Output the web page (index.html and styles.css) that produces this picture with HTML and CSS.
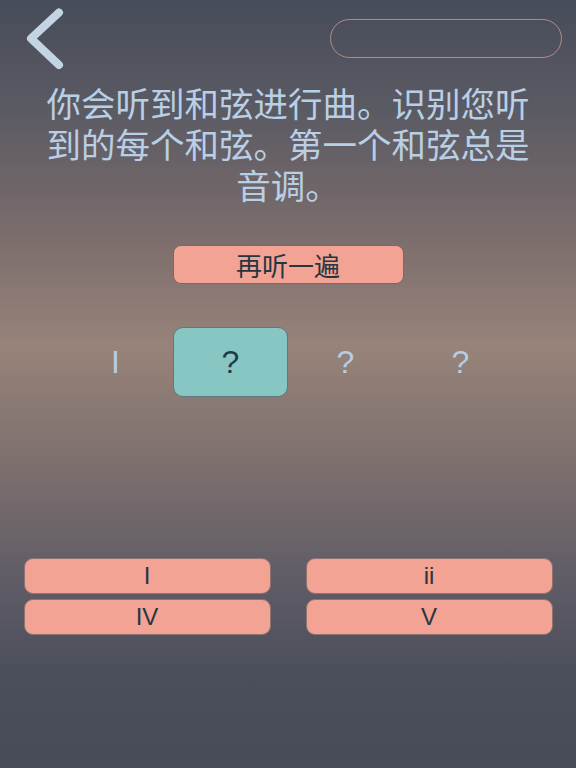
FILE: index.html
```html
<!DOCTYPE html>
<html lang="zh">
<head>
    <meta charset="UTF-8">
    <meta name="viewport" content="width=device-width, initial-scale=1.0">
    <title>和弦进行</title>
    <link rel="stylesheet" href="styles.css">
</head>
<body>
    <div class="screen">
        <!-- Top bar: back button and progress pill -->
        <div class="top-bar">
            <button class="back-btn" aria-label="返回">
                <svg width="44" height="64" viewBox="0 0 44 64">
                    <polyline points="36,5.5 8,31.5 36,58" fill="none" stroke="#c3d4e3" stroke-width="8" stroke-linecap="round" stroke-linejoin="round"/>
                </svg>
            </button>
            <div class="progress-pill"></div>
        </div>

        <p class="instructions">你会听到和弦进行曲。识别您听到的每个和弦。第一个和弦总是音调。</p>

        <button class="listen-btn">再听一遍</button>

        <!-- Chords heard so far -->
        <div class="chord-row">
            <div class="chord">I</div>
            <div class="chord current">?</div>
            <div class="chord">?</div>
            <div class="chord">?</div>
        </div>

        <!-- Answer choices -->
        <div class="answers">
            <button class="answer-btn">I</button>
            <button class="answer-btn">ii</button>
            <button class="answer-btn">IV</button>
            <button class="answer-btn">V</button>
        </div>
    </div>
</body>
</html>
```

FILE: styles.css
```css
/* General Styles */
html, body {
    margin: 0;
    padding: 0;
}

body {
    width: 576px;
    height: 768px;
    overflow: hidden;
    font-family: "Noto Sans CJK SC", "Liberation Sans", sans-serif;
    background: linear-gradient(to bottom,
        #474c5a 0%,
        #5a5a63 14%,
        #7a6c6c 30%,
        #978379 45%,
        #7e706e 60%,
        #625e67 74%,
        #4b4e5b 88%,
        #474b58 100%);
}

.screen {
    display: flex;
    flex-direction: column;
    align-items: center;
}

/* Top Bar */
.top-bar {
    width: 100%;
    height: 78px;
    display: flex;
    align-items: flex-start;
    justify-content: space-between;
    box-sizing: border-box;
    padding: 7px 14px 0 23px;
}

.back-btn {
    background: none;
    border: none;
    padding: 0;
    width: 44px;
    height: 64px;
}

.back-btn svg {
    display: block;
}

.progress-pill {
    margin-top: 12px;
    width: 230px;
    height: 37px;
    border: 1px solid #b08b88;
    border-radius: 20px;
}

/* Instructions */
.instructions {
    margin: 4px 0 0;
    padding: 0 44px;
    font-size: 34.5px;
    line-height: 41px;
    color: #b9cfe6;
    text-align: center;
}

/* Listen Again Button */
.listen-btn {
    margin-top: 40px;
    width: 231px;
    height: 39px;
    background-color: #f2a394;
    border: 1px solid #80675f;
    border-radius: 8px;
    font-family: "Noto Sans CJK SC", sans-serif;
    font-size: 26px;
    line-height: 1;
    color: #263641;
    padding: 0;
}

/* Chord Row */
.chord-row {
    margin-top: 43px;
    display: grid;
    grid-template-columns: repeat(4, 115px);
    height: 70px;
}

.chord {
    display: flex;
    align-items: center;
    justify-content: center;
    font-family: "Liberation Sans", sans-serif;
    font-size: 32px;
    color: #b7cde5;
}

.chord.current {
    background-color: #88c6c4;
    border: 1px solid #5a7a7e;
    border-radius: 10px;
    color: #1d3b46;
}

/* Answer Buttons */
.answers {
    margin-top: 161px;
    width: 529px;
    display: grid;
    grid-template-columns: 1fr 1fr;
    column-gap: 35px;
    row-gap: 5px;
}

.answer-btn {
    height: 36px;
    background-color: #f2a394;
    border: 1px solid #8d7470;
    border-radius: 9px;
    font-family: "Liberation Sans", sans-serif;
    font-size: 24px;
    color: #2b3540;
    padding: 0;
}
```
